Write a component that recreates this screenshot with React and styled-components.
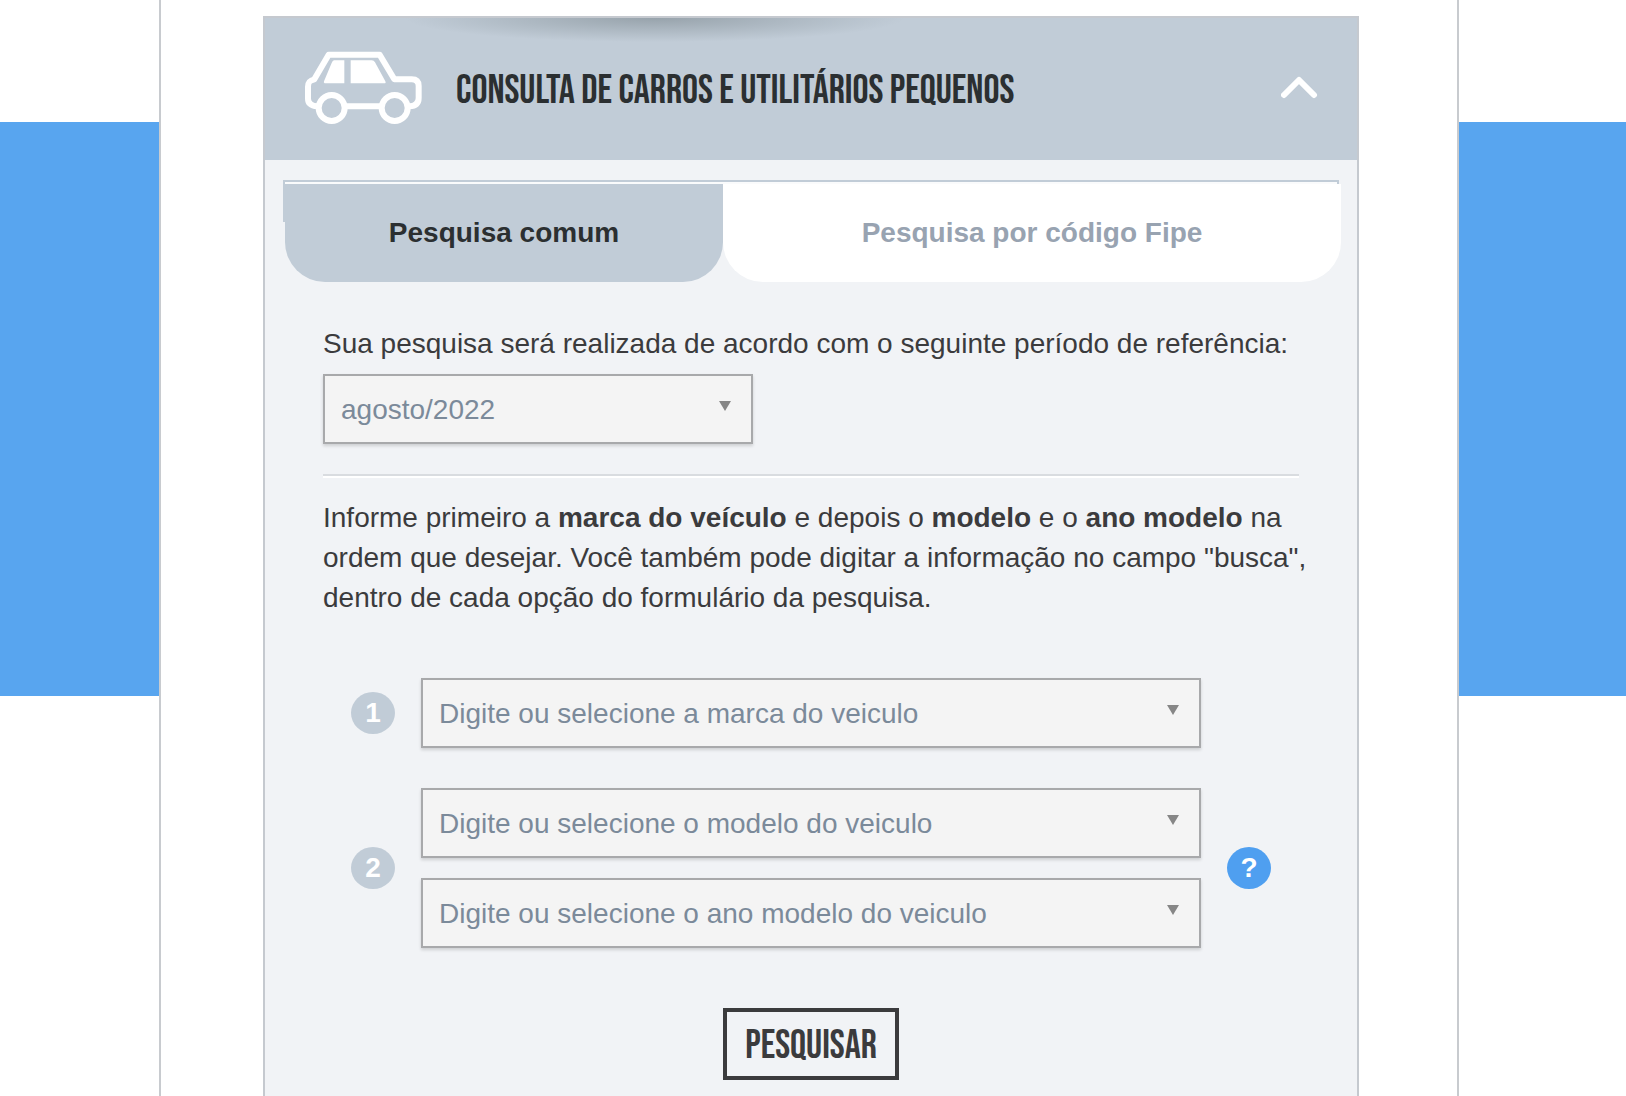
import React, { useState } from 'react';
import styled, { createGlobalStyle } from 'styled-components';

const GlobalStyle = createGlobalStyle`
  * {
    box-sizing: border-box;
  }

  body {
    margin: 0;
    background-color: #fff;
    color: #3b3b3d;
    font-family: "Liberation Sans", Arial, sans-serif;
    font-size: 28px;
    line-height: 40px;
  }
`;

const Page = styled.div`
  min-height: 100vh;
  display: flex;
  padding: 0 167px 0 159px;
  background: linear-gradient(#fff 122px, #58a5ef 122px, #58a5ef 696px, #fff 696px);
`;

const Column = styled.main`
  flex: 1;
  display: flex;
  padding: 16px 98px 0 102px;
  background-color: #fff;
  border: solid #c8cbcf;
  border-width: 0 2px;
`;

const Card = styled.section`
  flex: 1;
  background-color: #f1f3f6;
  border: 2px solid #c5c9cf;
  border-bottom: none;
`;

const CardHeader = styled.header`
  height: 142px;
  display: flex;
  align-items: center;
  padding: 0 38px;
  background:
    radial-gradient(ellipse 250px 24px at 390px 0, rgba(110, 122, 128, 0.5), rgba(110, 122, 128, 0) 100%),
    #c1ccd7;
`;

const CarIcon = styled.svg`
  flex: none;
  width: 121px;
  height: 75px;
  margin: 0 32px 4px 0;
`;

const Title = styled.h2`
  flex: 1;
  margin: 0;
  padding-top: 4px;
  color: #2b2f31;
  font-family: "Bebas Neue", "Liberation Sans", sans-serif;
  font-size: 40px;
  font-weight: normal;
  text-transform: uppercase;
`;

const ToggleButton = styled.button`
  display: flex;
  margin-bottom: 4px;
  padding: 0;
  background: none;
  border: none;
  cursor: pointer;
`;

const CardBody = styled.div`
  padding: 20px 18px 16px;
`;

const Tabs = styled.div`
  height: 42px;
  display: flex;
  margin-bottom: 102px;
  padding-top: 2px;
  border: 2px solid #c1ccd7;
  border-bottom: none;
  background: linear-gradient(#fafbfc, #fafbfc) top / 100% 2px no-repeat;
`;

const Tab = styled.button`
  flex: ${(props) => props.$grow} 0 0;
  height: 98px;
  margin-right: ${(props) => (props.$last ? '-4px' : '0')};
  padding: 0;
  border: none;
  border-radius: 0 0 40px 40px;
  background-color: ${(props) => (props.$active ? '#c1ccd7' : '#fff')};
  color: ${(props) => (props.$active ? '#2b2f31' : '#98a3b1')};
  font: bold 28px/40px "Liberation Sans", Arial, sans-serif;
  cursor: pointer;
`;

const Form = styled.form`
  display: flex;
  flex-direction: column;
  padding: 0 40px;
`;

const PeriodLabel = styled.label`
  margin-bottom: 10px;
`;

const SelectBox = styled.div`
  position: relative;
  width: ${(props) => props.$width || '100%'};
`;

const Select = styled.select`
  display: block;
  width: 100%;
  height: 70px;
  padding: 2px 48px 0 16px;
  appearance: none;
  border: 2px solid #a8a9ab;
  border-radius: 0;
  background-color: #f4f4f4;
  box-shadow: 0 2px 3px rgba(0, 0, 0, 0.15);
  color: #7b8a9a;
  font: 28px/40px "Liberation Sans", Arial, sans-serif;
`;

const Arrow = styled.svg`
  position: absolute;
  top: 27px;
  right: 22px;
  width: 12px;
  height: 10px;
  fill: #868686;
  pointer-events: none;
`;

const Divider = styled.hr`
  width: 100%;
  height: 4px;
  margin: 30px 0 20px;
  border: solid #d9dce0;
  border-width: 2px 0 0;
  background-color: #fff;
`;

/* runs slightly past the divider so the second line keeps "busca" */
const Info = styled.p`
  margin: 0 -16px 60px 0;
`;

const Steps = styled.div`
  display: grid;
  grid-template-columns: 44px 1fr 44px;
  align-items: center;
  gap: 40px 26px;
  padding: 0 28px;
`;

const StepFields = styled.div`
  grid-column: 2;
  display: flex;
  flex-direction: column;
  gap: 20px;
`;

const StepNumber = styled.span`
  height: 42px;
  border-radius: 50%;
  background-color: #c1ccd7;
  color: #fff;
  font-weight: bold;
  line-height: 42px;
  text-align: center;
`;

const HelpButton = styled.button`
  height: 42px;
  padding: 0;
  border: none;
  border-radius: 50%;
  background-color: #4f9ff0;
  color: #fff;
  font: bold 28px/42px "Liberation Sans", Arial, sans-serif;
  cursor: pointer;
`;

const SearchButton = styled.button`
  align-self: center;
  height: 72px;
  margin-top: 60px;
  padding: 4px 18px 0;
  border: 4px solid #3b3b3d;
  background: none;
  color: #3b3b3d;
  font: 40px/40px "Bebas Neue", "Liberation Sans", sans-serif;
  text-transform: uppercase;
  cursor: pointer;
`;

function SelectField({ label, width, id, options }) {
  return (
    <SelectBox $width={width}>
      <Select id={id} aria-label={label}>
        {options.map((option) => (
          <option key={option}>{option}</option>
        ))}
      </Select>
      <Arrow viewBox="0 0 12 10" aria-hidden="true">
        <path d="M0 0h12L6 10z" />
      </Arrow>
    </SelectBox>
  );
}

function Car() {
  return (
    <CarIcon viewBox="160 148 363 225" fill="none" stroke="#fff" strokeWidth="18" strokeLinejoin="round" aria-hidden="true">
      <path d="M203 317 C184 315 175 308 175 294 V258 C175 243 181 239 194 236 L237 162 H390 L434 236 H486 C500 236 507 243 507 256 V292 C507 307 499 316 479 317 M289 317 H391" />
      <circle cx="246" cy="322" r="39" />
      <circle cx="435" cy="322" r="39" />
      <path d="M253 179h31v69h-59q-4-1-2-6l23-55q3-8 7-8zM303 179h63q7 0 10 6l31 57q3 6-3 6H303z" fill="#fff" stroke="none" />
    </CarIcon>
  );
}

export default function App() {
  const [tab, setTab] = useState('comum');

  return (
    <>
      <GlobalStyle />
      <Page>
        <Column>
          <Card>
            <CardHeader>
              <Car />
              <Title>Consulta de carros e utilitários pequenos</Title>
              <ToggleButton type="button" aria-label="Recolher">
                <svg width="38" height="26" viewBox="0 0 38 26" fill="none" stroke="#fff" strokeWidth="6" strokeLinecap="round" strokeLinejoin="round">
                  <path d="M3 21 18 6l15 15" />
                </svg>
              </ToggleButton>
            </CardHeader>
            <CardBody>
              <Tabs role="tablist">
                <Tab
                  type="button"
                  role="tab"
                  aria-selected={tab === 'comum'}
                  $grow={438}
                  $active={tab === 'comum'}
                  onClick={() => setTab('comum')}
                >
                  Pesquisa comum
                </Tab>
                <Tab
                  type="button"
                  role="tab"
                  aria-selected={tab === 'codigo'}
                  $grow={618}
                  $last
                  $active={tab === 'codigo'}
                  onClick={() => setTab('codigo')}
                >
                  Pesquisa por código Fipe
                </Tab>
              </Tabs>
              <Form onSubmit={(e) => e.preventDefault()}>
                <PeriodLabel htmlFor="periodo">
                  Sua pesquisa será realizada de acordo com o seguinte período de referência:
                </PeriodLabel>
                <SelectField id="periodo" width="430px" options={['agosto/2022']} />
                <Divider />
                <Info>
                  Informe primeiro a <strong>marca do veículo</strong> e depois o <strong>modelo</strong> e o{' '}
                  <strong>ano modelo</strong> na ordem que desejar. Você também pode digitar a informação no campo
                  "busca", dentro de cada opção do formulário da pesquisa.
                </Info>
                <Steps>
                  <StepNumber>1</StepNumber>
                  <StepFields>
                    <SelectField label="Marca" options={['Digite ou selecione a marca do veiculo']} />
                  </StepFields>
                  <span />
                  <StepNumber>2</StepNumber>
                  <StepFields>
                    <SelectField label="Modelo" options={['Digite ou selecione o modelo do veiculo']} />
                    <SelectField label="Ano modelo" options={['Digite ou selecione o ano modelo do veiculo']} />
                  </StepFields>
                  <HelpButton type="button">?</HelpButton>
                </Steps>
                <SearchButton type="submit">Pesquisar</SearchButton>
              </Form>
            </CardBody>
          </Card>
        </Column>
      </Page>
    </>
  );
}
